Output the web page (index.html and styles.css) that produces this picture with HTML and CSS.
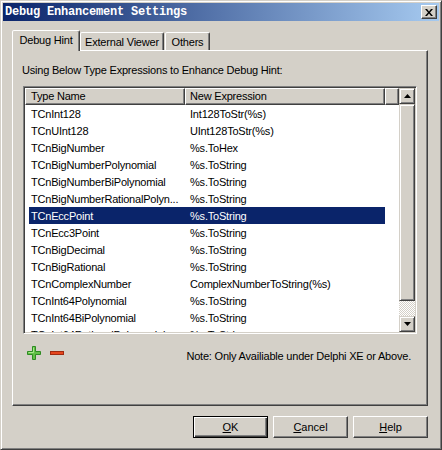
FILE: index.html
```html
<!DOCTYPE html>
<html>
<head>
<meta charset="utf-8">
<link rel="stylesheet" href="styles.css">
</head>
<body>
<div class="window">
  <div class="titlebar">
    <span class="title">Debug Enhancement Settings</span>
    <span class="close"><svg width="8" height="7" viewBox="0 0 8 7"><path d="M0 0h2l2 2.4L6 0h2L5 3.5 8 7H6L4 4.6 2 7H0l3-3.5z" fill="#000"/></svg></span>
  </div>
  <div class="body">
    <div class="tabs">
      <div class="tab active t1">Debug Hint</div>
      <div class="tab t2">External Viewer</div>
      <div class="tab t3">Others</div>
    </div>
    <div class="panel">
      <div class="caption">Using Below Type Expressions to Enhance Debug Hint:</div>
      <div class="listbox">
        <div class="listmain">
          <div class="header">
            <div class="hcell h1">Type Name</div>
            <div class="hcell h2">New Expression</div>
            <div class="hcell h3"></div>
          </div>
          <div class="rows">
            <div class="row"><span class="c1">TCnInt128</span><span class="c2">Int128ToStr(%s)</span></div>
            <div class="row"><span class="c1">TCnUInt128</span><span class="c2">UInt128ToStr(%s)</span></div>
            <div class="row"><span class="c1">TCnBigNumber</span><span class="c2">%s.ToHex</span></div>
            <div class="row"><span class="c1">TCnBigNumberPolynomial</span><span class="c2">%s.ToString</span></div>
            <div class="row"><span class="c1">TCnBigNumberBiPolynomial</span><span class="c2">%s.ToString</span></div>
            <div class="row"><span class="c1">TCnBigNumberRationalPolyn...</span><span class="c2">%s.ToString</span></div>
            <div class="row sel"><span class="c1">TCnEccPoint</span><span class="c2">%s.ToString</span></div>
            <div class="row"><span class="c1">TCnEcc3Point</span><span class="c2">%s.ToString</span></div>
            <div class="row"><span class="c1">TCnBigDecimal</span><span class="c2">%s.ToString</span></div>
            <div class="row"><span class="c1">TCnBigRational</span><span class="c2">%s.ToString</span></div>
            <div class="row"><span class="c1">TCnComplexNumber</span><span class="c2">ComplexNumberToString(%s)</span></div>
            <div class="row"><span class="c1">TCnInt64Polynomial</span><span class="c2">%s.ToString</span></div>
            <div class="row"><span class="c1">TCnInt64BiPolynomial</span><span class="c2">%s.ToString</span></div>
            <div class="row"><span class="c1">TCnInt64RationalPolynomial</span><span class="c2">%s.ToString</span></div>
          </div>
        </div>
        <div class="vscroll">
          <div class="sbtn"><svg width="7" height="4" viewBox="0 0 7 4"><path d="M3.5 0L7 4H0z" fill="#000"/></svg></div>
          <div class="thumb"></div>
          <div class="track"></div>
          <div class="sbtn"><svg width="7" height="4" viewBox="0 0 7 4"><path d="M0 0h7L3.5 4z" fill="#000"/></svg></div>
        </div>
      </div>
      <div class="footer">
        <div class="icons">
          <svg class="plus" width="14" height="14" viewBox="0 0 14 14"><path d="M5.5 0.5H8.5V5.5H13.5V8.5H8.5V13.5H5.5V8.5H0.5V5.5H5.5Z" fill="#62c046" stroke="#2e8b22"/><path d="M6.5 1.5V6.5H1.5" fill="none" stroke="#a6e88a"/></svg>
          <svg class="minus" width="14" height="4" viewBox="0 0 14 4"><rect x="0.5" y="0.5" width="13" height="3" fill="#e6461e" stroke="#a02a10"/></svg>
        </div>
        <div class="note">Note: Only Availiable under Delphi XE or Above.</div>
      </div>
    </div>
    <div class="buttons">
      <div class="btn default"><span><u>O</u>K</span></div>
      <div class="btn"><span><u>C</u>ancel</span></div>
      <div class="btn"><span><u>H</u>elp</span></div>
    </div>
  </div>
</div>
</body>
</html>
```
FILE: styles.css
```css
* { box-sizing: border-box; }
html, body { margin: 0; padding: 0; background: #d4d0c8; }
body { font-family: "Liberation Sans", Arial, sans-serif; font-size: 11px; color: #000; letter-spacing: -0.2px; }

.window {
  width: 442px; height: 450px; background: #d4d0c8;
  border: 1px solid; border-color: #d4d0c8 #404040 #404040 #d4d0c8;
  box-shadow: inset 1px 1px #fff, inset -1px -1px #808080;
  padding: 2px; display: flex; flex-direction: column;
}
.titlebar {
  height: 18px; flex: none; display: flex; align-items: center; padding: 0 2px;
  background: linear-gradient(to right, #0a246a, #a6caf0);
}
.title {
  color: #fff; font-family: "Liberation Mono", monospace; font-weight: bold;
  font-size: 12px; letter-spacing: -0.2px;
}
.close {
  margin-left: auto; width: 16px; height: 14px; background: #d4d0c8;
  border: 1px solid; border-color: #fff #404040 #404040 #fff;
  box-shadow: inset -1px -1px #808080;
  display: flex; align-items: center; justify-content: center;
}
.close svg { display: block; }

.body { flex: 1; padding: 9px 11px 9px 9px; display: flex; flex-direction: column; }

.tabs { display: flex; align-items: flex-end; height: 20px; flex: none; position: relative; z-index: 1; }
.tab {
  height: 18px; border: 1px solid; border-bottom: none;
  border-color: #fff #404040 transparent #fff;
  box-shadow: inset -1px 0 #808080;
  border-radius: 2px 2px 0 0;
  display: flex; align-items: center; justify-content: center;
  background: #d4d0c8; padding-top: 1px;
}
.tab.active { height: 21px; margin-bottom: -1px; padding-bottom: 2px; padding-top: 0; }
.t1 { width: 68px; }
.t2 { width: 84px; margin-right: 1px; }
.t3 { width: 45px; }

.panel {
  flex: 1; border: 1px solid; border-color: #fff #404040 #404040 #fff;
  box-shadow: inset -1px -1px #808080;
  padding: 13px 10px 0 10px; display: flex; flex-direction: column;
}
.caption { height: 13px; line-height: 13px; margin-left: -1px; white-space: nowrap; }

.listbox {
  margin-top: 9px; height: 248px; flex: none;
  border: 1px solid; border-color: #808080 #fff #fff #808080;
  box-shadow: inset 1px 1px #404040, inset -1px -1px #d4d0c8;
  padding: 1px; display: flex; background: #fff;
}
.listmain { flex: 1; overflow: hidden; display: flex; flex-direction: column; }
.header { height: 17px; flex: none; display: flex; }
.hcell {
  background: #d4d0c8; border: 1px solid; border-color: #fff #404040 #404040 #fff;
  box-shadow: inset -1px -1px #808080; line-height: 14px; white-space: nowrap;
}
.h1 { width: 160px; padding-left: 5px; }
.h2 { width: 200px; padding-left: 4px; }
.h3 { flex: 1; }
.rows { flex: 1; overflow: hidden; }
.row {
  height: 17px; line-height: 16px; padding-top: 1px; margin-left: 4px; width: 356px;
  display: flex; white-space: nowrap;
}
.row .c1 { width: 161px; padding-left: 2px; flex: none; }
.row .c2 { flex: 1; }
.row.sel { background: #0a246a; color: #fff; }

.vscroll { width: 16px; flex: none; display: flex; flex-direction: column; }
.sbtn, .thumb {
  background: #d4d0c8; border: 1px solid; border-color: #d4d0c8 #404040 #404040 #d4d0c8;
  box-shadow: inset 1px 1px #fff, inset -1px -1px #808080;
}
.sbtn { height: 16px; flex: none; display: flex; align-items: center; justify-content: center; }
.sbtn svg { display: block; }
.thumb { height: 197px; flex: none; }
.track { flex: 1; background: repeating-conic-gradient(#fff 0 25%, #d4d0c8 0 50%) 0 0 / 2px 2px; }

.footer { display: flex; align-items: flex-start; margin-top: 12px; padding-right: 6px; }
.icons { display: flex; align-items: center; gap: 9px; margin-left: 4px; height: 14px; }
.icons svg { display: block; }
.note { margin-left: auto; margin-top: 4px; line-height: 13px; white-space: nowrap; }

.buttons { display: flex; justify-content: flex-end; gap: 5px; margin-top: 10px; height: 22px; flex: none; }
.btn {
  width: 75px; height: 22px; border: 1px solid; border-color: #fff #404040 #404040 #fff;
  box-shadow: inset -1px -1px #808080;
  display: flex; align-items: center; justify-content: center; letter-spacing: 0;
}
.btn.default {
  border-color: #000;
  box-shadow: inset 1px 1px #fff, inset -1px -1px #404040, inset -2px -2px #808080;
}
```
